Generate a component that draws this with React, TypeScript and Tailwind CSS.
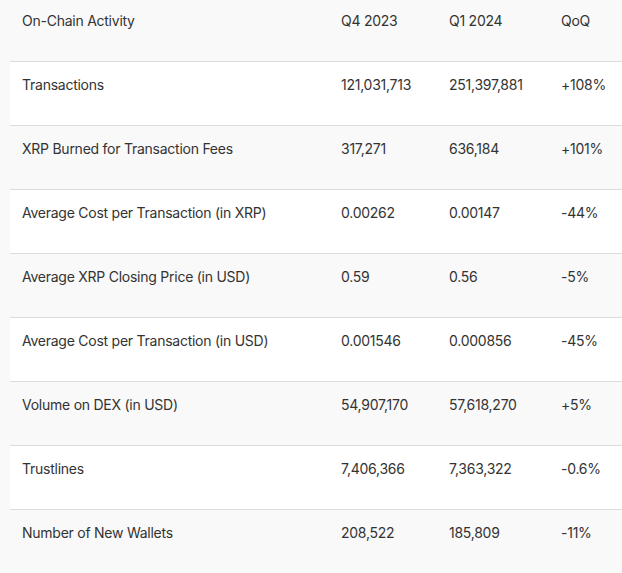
const rows = [
  ["Transactions", "121,031,713", "251,397,881", "+108%"],
  ["XRP Burned for Transaction Fees", "317,271", "636,184", "+101%"],
  ["Average Cost per Transaction (in XRP)", "0.00262", "0.00147", "-44%"],
  ["Average XRP Closing Price (in USD)", "0.59", "0.56", "-5%"],
  ["Average Cost per Transaction (in USD)", "0.001546", "0.000856", "-45%"],
  ["Volume on DEX (in USD)", "54,907,170", "57,618,270", "+5%"],
  ["Trustlines", "7,406,366", "7,363,322", "-0.6%"],
  ["Number of New Wallets", "208,522", "185,809", "-11%"],
]

const cols = "grid grid-cols-[319px_108px_112px_1fr]"

export default function App() {
  return (
    <div className="min-h-screen bg-[#f9f9f9] pl-[10px] text-[14px] leading-5 tracking-[-0.25px] text-[#333] font-['Inter',sans-serif]">
      <div className={`${cols} h-[61px] pt-[11px]`}>
        <div className="px-3">On-Chain Activity</div>
        <div className="px-3">Q4 2023</div>
        <div className="px-3">Q1 2024</div>
        <div className="px-3">QoQ</div>
      </div>
      {rows.map((r, i) => (
        <div
          key={r[0]}
          className={`${cols} h-[64px] border-t border-[#dcdcdc] pt-[13px] ${i % 2 === 0 ? "bg-white" : "bg-[#f9f9f9]"}`}
        >
          {r.map((c, j) => (
            <div key={j} className="px-3">{c}</div>
          ))}
        </div>
      ))}
    </div>
  )
}
